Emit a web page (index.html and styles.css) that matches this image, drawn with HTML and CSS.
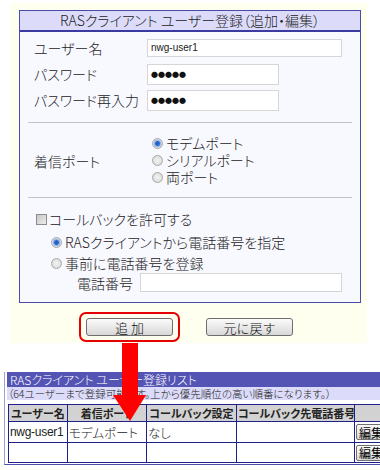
FILE: index.html
```html
<!DOCTYPE html>
<html lang="ja">
<head>
  <meta charset="UTF-8" />
  <title>RASクライアント ユーザー登録</title>
  <link rel="stylesheet" href="styles.css">
</head>
<body>
  <!-- edit form -->
  <div class="edit-area">
    <div class="panel">
      <div class="panel-title">RASクライアント ユーザー登録（追加・編集）</div>

      <div class="section account">
        <div class="row">
          <span class="label">ユーザー名</span>
          <div class="field field-user">nwg-user1</div>
        </div>
        <div class="row">
          <span class="label">パスワード</span>
          <div class="field field-pass">●●●●●</div>
        </div>
        <div class="row">
          <span class="label">パスワード再入力</span>
          <div class="field field-pass">●●●●●</div>
        </div>
      </div>

      <div class="sep"></div>

      <div class="section port">
        <span class="label port-label">着信ポート</span>
        <div class="choices">
          <div class="choice"><span class="radio on"></span>モデムポート</div>
          <div class="choice"><span class="radio"></span>シリアルポート</div>
          <div class="choice"><span class="radio"></span>両ポート</div>
        </div>
      </div>

      <div class="sep"></div>

      <div class="section callback">
        <div class="choice check-row"><span class="check"></span>コールバックを許可する</div>
        <div class="choice sub-row"><span class="radio on"></span>RASクライアントから電話番号を指定</div>
        <div class="choice sub-row pre-row"><span class="radio"></span>事前に電話番号を登録</div>
        <div class="row phone-row">
          <span class="phone-label">電話番号</span>
          <div class="field field-phone"></div>
        </div>
      </div>
    </div>

    <div class="actions">
      <span class="highlight"><button class="btn">追 加</button></span>
      <button class="btn">元に戻す</button>
    </div>
  </div>

  <!-- user list -->
  <div class="list">
    <div class="list-title">RASクライアント ユーザー登録リスト</div>
    <div class="list-note">（64ユーザーまで登録可能です。上から優先順位の高い順番になります。）</div>
    <table class="users">
      <colgroup>
        <col class="c-name"><col class="c-port"><col class="c-cb"><col class="c-tel"><col class="c-act">
      </colgroup>
      <thead>
        <tr><th>ユーザー名</th><th>着信ポート</th><th>コールバック設定</th><th>コールバック先電話番号</th><th></th></tr>
      </thead>
      <tbody>
        <tr class="r1"><td class="small">nwg-user1</td><td>モデムポート</td><td>なし</td><td></td><td><button class="btn-edit">編集</button></td></tr>
        <tr class="r2"><td></td><td></td><td></td><td></td><td><button class="btn-edit">編集</button></td></tr>
      </tbody>
    </table>
  </div>

  <svg class="arrow" width="40" height="82" viewBox="0 0 40 82">
    <polygon points="9,0 25,0 25,52 33,52 17,78 0,52 9,52" fill="#ff0000" />
  </svg>
</body>
</html>
```

FILE: styles.css
```css
html, body {
  overflow: hidden;
}
body {
  margin: 0;
  position: relative;
  width: 380px;
  height: 470px;
  background: #fff;
  color: #222;
  font-family: "Noto Sans CJK JP", "DejaVu Sans", sans-serif;
  font-feature-settings: "palt";
  font-weight: 300;
  font-size: 14px;
}
.edit-area {
  margin: 3px 0 0 10px;
  width: 357px;
  padding: 7px 0 1px 9px;
  box-sizing: border-box;
  background: #fffff0;
}
.panel {
  width: 342px;
  box-sizing: border-box;
  border: 1px solid #4a4aa8;
  background: #f8f8ff;
}
.panel-title {
  height: 19px;
  line-height: 19px;
  text-align: center;
  background: #dcdcfa;
  border-bottom: 2px solid #3a3aa0;
}
.sep {
  height: 1px;
  margin: 0 8px;
  background: #c4c4c4;
}
.row {
  display: flex;
  align-items: center;
}
.label {
  width: 113px;
  flex-shrink: 0;
}
.field {
  box-sizing: border-box;
  border: 1px solid #d6d6d6;
  background: #fff;
}
.account {
  padding: 3px 0 9px 14px;
}
.account .row {
  height: 26px;
}
.field-user {
  width: 195px;
  height: 18px;
  padding-left: 3px;
  font-size: 10px;
  line-height: 16px;
  font-weight: normal;
  font-family: "Liberation Sans", sans-serif;
}
.field-pass {
  width: 132px;
  height: 21px;
  padding-left: 3px;
  font-size: 7px;
  line-height: 19px;
  color: #111;
  font-weight: normal;
}
.port {
  display: flex;
  align-items: center;
  padding: 12px 0 11px 14px;
}
.port-label {
  width: 118px;
}
.choice {
  display: flex;
  align-items: center;
  height: 17px;
  line-height: 17px;
}
.radio {
  width: 9px;
  height: 9px;
  border-radius: 50%;
  border: 1px solid #a8a8a8;
  background: radial-gradient(circle, #f4f4f4 0, #d4d4d4 100%);
  margin-right: 3px;
}
.radio.on {
  background: radial-gradient(circle, #1b55b8 0, #2f6cd0 2px, #8fb2e8 3px, #e4e4e4 4.5px);
}
.check {
  width: 9px;
  height: 9px;
  border: 1px solid #8c8c8c;
  background: linear-gradient(135deg, #c8c8c8, #ececec);
  margin-right: 2px;
}
.callback {
  padding: 10px 0 10px 16px;
}
.check-row {
  height: 22px;
  line-height: 22px;
}
.sub-row {
  margin-left: 15px;
  height: 22px;
  line-height: 22px;
  margin-top: 1px;
}
.pre-row {
  height: 20px;
  line-height: 20px;
  margin-top: 0;
}
.phone-row {
  height: 19px;
}
.phone-label {
  width: 63px;
  margin-left: 41px;
}
.field-phone {
  width: 202px;
  height: 19px;
}
.actions {
  display: flex;
  align-items: center;
  margin: 9px 0 0 60px;
  height: 30px;
}
.highlight {
  display: flex;
  border: 2px solid #e60000;
  border-radius: 7px;
  padding: 4px 5px;
  margin-right: 26px;
}
.btn {
  width: 87px;
  height: 18px;
  padding: 0;
  border: 1px solid #6e6e6e;
  border-radius: 3px;
  background: linear-gradient(#fbfbfb, #d8d8d8);
  font-family: "Noto Sans CJK JP", sans-serif;
  font-weight: 300;
  font-size: 13px;
  line-height: 15px;
  color: #111;
}
.list {
  margin: 29px 0 0 4px;
  width: 430px;
  border-left: 1px solid #a0a0d0;
  border-bottom: 1px solid #5050a8;
  padding: 0 0 1px 2px;
}
.list-title {
  height: 15px;
  line-height: 15px;
  background: #5454b4;
  color: #fff;
  padding-left: 3px;
  font-size: 12px;
  overflow: hidden;
}
.list-note {
  height: 13px;
  line-height: 13px;
  background: #dcdcfa;
  font-size: 10.5px;
  padding-left: 1px;
  margin-bottom: 4px;
  overflow: hidden;
}
.users {
  table-layout: fixed;
  border-collapse: collapse;
  width: 420px;
  margin-left: 1px;
  font-size: 12.5px;
}
.c-name { width: 59px; }
.c-port { width: 79px; }
.c-cb { width: 90px; }
.c-tel { width: 118px; }
.c-act { width: 74px; }
.users th, .users td {
  border: 1px solid #20208a;
  padding: 0 1px;
  white-space: nowrap;
  overflow: hidden;
}
.users th {
  height: 16px;
  background: #d2d2d2;
  font-size: 11px;
  font-weight: bold;
  line-height: 16px;
}
.users td {
  background: #fff;
  text-align: left;
}
.r1 td { height: 20px; }
.r2 td { height: 18px; }
.small {
  font-family: "Liberation Sans", sans-serif;
  font-weight: normal;
  font-size: 12px;
  letter-spacing: -0.3px;
}
.btn-edit {
  height: 16px;
  width: 40px;
  padding: 0 2px;
  border: 1px solid #707070;
  border-radius: 2px;
  background: linear-gradient(#fafafa, #d8d8d8);
  font-family: "Noto Sans CJK JP", sans-serif;
  font-size: 12px;
  line-height: 13px;
  text-align: left;
}
.arrow {
  position: absolute;
  left: 113px;
  top: 343px;
}
```
